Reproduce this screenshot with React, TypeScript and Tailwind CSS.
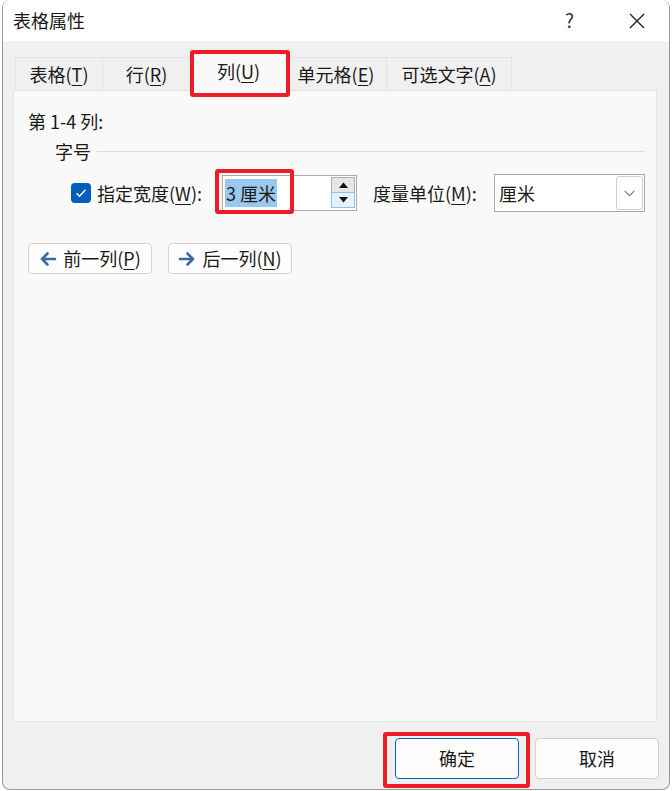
const font = { fontFamily: '"Noto Sans CJK SC", "Microsoft YaHei", sans-serif' };

function Mn({ children }: { children: string }) {
  return <span className="underline underline-offset-[3px] decoration-1">{children}</span>;
}

function Tab({ label, mn, w, selected }: { label: string; mn: string; w: string; selected?: boolean }) {
  return (
    <div
      className={`${w} flex items-center justify-center border border-[#e3e3e3] ${
        selected
          ? "h-[39px] -mx-[2px] bg-[#f9f9f9] border-b-0 relative z-10 -mb-px pb-[3px]"
          : "h-[34px] bg-[#f0f0f0] -ml-px"
      }`}
    >
      <span>
        {label}(<Mn>{mn}</Mn>)
      </span>
    </div>
  );
}

function ArrowIcon({ dir }: { dir: "left" | "right" }) {
  return (
    <svg width="18" height="16" viewBox="0 0 18 16" className={dir === "right" ? "rotate-180" : ""}>
      <path d="M16 8H3M8.5 2.5L3 8l5.5 5.5" fill="none" stroke="#3d6a9c" strokeWidth="2.6" strokeLinecap="round" strokeLinejoin="round" />
    </svg>
  );
}

function NavButton({ label, mn, dir }: { label: string; mn: string; dir: "left" | "right" }) {
  return (
    <button className="w-[124px] h-[31px] flex items-center justify-center gap-[6px] bg-[#fdfdfd] border border-[#d3d3d3] rounded-[4px] text-[18px] text-[#1a1a1a]">
      <ArrowIcon dir={dir} />
      <span>
        {label}(<Mn>{mn}</Mn>)
      </span>
    </button>
  );
}

export default function App() {
  return (
    <div className="w-[672px] h-[791px] flex bg-white text-[#1a1a1a] overflow-hidden" style={font}>
      <div className="w-[2px] shrink-0 bg-white" />
      <div className="w-[668px] h-[790px] flex flex-col bg-[#f0f0f0] border border-t-0 border-[#9a9a9a] rounded-[8px] overflow-hidden relative">
        {/* title bar */}
        <div className="h-[41px] bg-white flex items-center pl-[10px] shrink-0">
          <span className="text-[18px]">表格属性</span>
          <span className="ml-auto mr-[54px] text-[19px] text-[#333]">?</span>
          <svg width="18" height="18" viewBox="0 0 18 18" className="mr-[23px]">
            <path d="M2 2l14 14M16 2L2 16" stroke="#222" strokeWidth="1.4" />
          </svg>
        </div>

        {/* body */}
        <div className="flex-1 flex flex-col pl-[10px] pr-[10px] pt-[11px] text-[18px]">
          <div className="flex items-end h-[39px] pl-[3px]">
            <Tab label="表格" mn="T" w="w-[88px]" />
            <Tab label="行" mn="R" w="w-[89px]" />
            <Tab label="列" mn="U" w="w-[99px]" selected />
            <Tab label="单元格" mn="E" w="w-[102px]" />
            <Tab label="可选文字" mn="A" w="w-[126px]" />
          </div>

          <div className="h-[632px] -mt-px mr-[2px] bg-[#f9f9f9] border border-[#e3e3e3] pl-[14px] pr-[11px] pt-[18px]">
            <div className="h-[24px] leading-[24px]">第 1-4 列:</div>

            <div className="mt-[6px] flex items-center h-[24px] pl-[27px]">
              <span className="leading-[24px]">字号</span>
              <div className="flex-1 ml-[6px] h-px bg-[#dcdcdc]" />
            </div>

            <div className="mt-[11px] flex items-center h-[38px] pl-[43px]">
              <div className="w-[20px] h-[20px] rounded-[4px] bg-[#005fb8] flex items-center justify-center shrink-0">
                <svg width="12" height="10" viewBox="0 0 12 10">
                  <path d="M1.5 5.2l3 3L10.5 1.8" fill="none" stroke="white" strokeWidth="1.3" />
                </svg>
              </div>
              <span className="ml-[6px] w-[125px] shrink-0 whitespace-nowrap">
                指定宽度(<Mn>W</Mn>):
              </span>
              <div className="w-[135px] h-[36px] shrink-0 bg-white border border-[#a9a9a9] flex items-center pl-[2px] pr-[1px]">
                <span className="bg-[#99c9ef] leading-[28px] h-[28px] px-[1px] text-[18px]">3 厘米</span>
                <div className="ml-auto w-[24px] h-[32px] flex flex-col">
                  <div className="h-[16px] bg-[#e6e6e6] border border-[#adadad] flex items-center justify-center">
                    <svg width="9" height="6" viewBox="0 0 9 6"><path d="M0 6L4.5 0.5L9 6z" fill="#111" /></svg>
                  </div>
                  <div className="h-[16px] bg-[#e5f1fb] border border-[#8ec0ec] -mt-px flex items-center justify-center">
                    <svg width="9" height="6" viewBox="0 0 9 6"><path d="M0 0L4.5 5.5L9 0z" fill="#111" /></svg>
                  </div>
                </div>
              </div>
              <span className="ml-[16px] w-[121px] shrink-0 whitespace-nowrap">
                度量单位(<Mn>M</Mn>):
              </span>
              <div className="w-[151px] h-[38px] shrink-0 bg-white border border-[#a9a9a9] flex items-center pl-[4px] pr-[1px]">
                <span>厘米</span>
                <div className="ml-auto w-[27px] h-[34px] border border-[#d0d0d0] rounded-[3px] flex items-center justify-center">
                  <svg width="11" height="7" viewBox="0 0 11 7">
                    <path d="M0.7 0.9L5.5 5.7L10.3 0.9" fill="none" stroke="#777" strokeWidth="1.1" />
                  </svg>
                </div>
              </div>
            </div>

            <div className="mt-[31px] flex gap-[16px]">
              <NavButton label="前一列" mn="P" dir="left" />
              <NavButton label="后一列" mn="N" dir="right" />
            </div>
          </div>

          <div className="flex-1 flex items-start justify-end gap-[16px] pt-[16px]">
            <button className="w-[124px] h-[41px] bg-[#fdfdfd] border border-[#0067c0] rounded-[4px] text-[18px]">确定</button>
            <button className="w-[124px] h-[41px] bg-[#fdfdfd] border border-[#d0d0d0] rounded-[4px] text-[18px]">取消</button>
          </div>
        </div>

        {/* red annotation boxes */}
        <div className="absolute left-[187px] top-[50px] w-[100px] h-[47px] border-[4px] border-[#ee1c25] rounded-[3px] z-20" />
        <div className="absolute left-[212px] top-[169px] w-[79px] h-[45px] border-[4px] border-[#ee1c25] rounded-[3px] z-20" />
        <div className="absolute left-[380px] top-[732px] w-[147px] h-[56px] border-[4px] border-[#ee1c25] rounded-[3px] z-20" />
      </div>
    </div>
  );
}
